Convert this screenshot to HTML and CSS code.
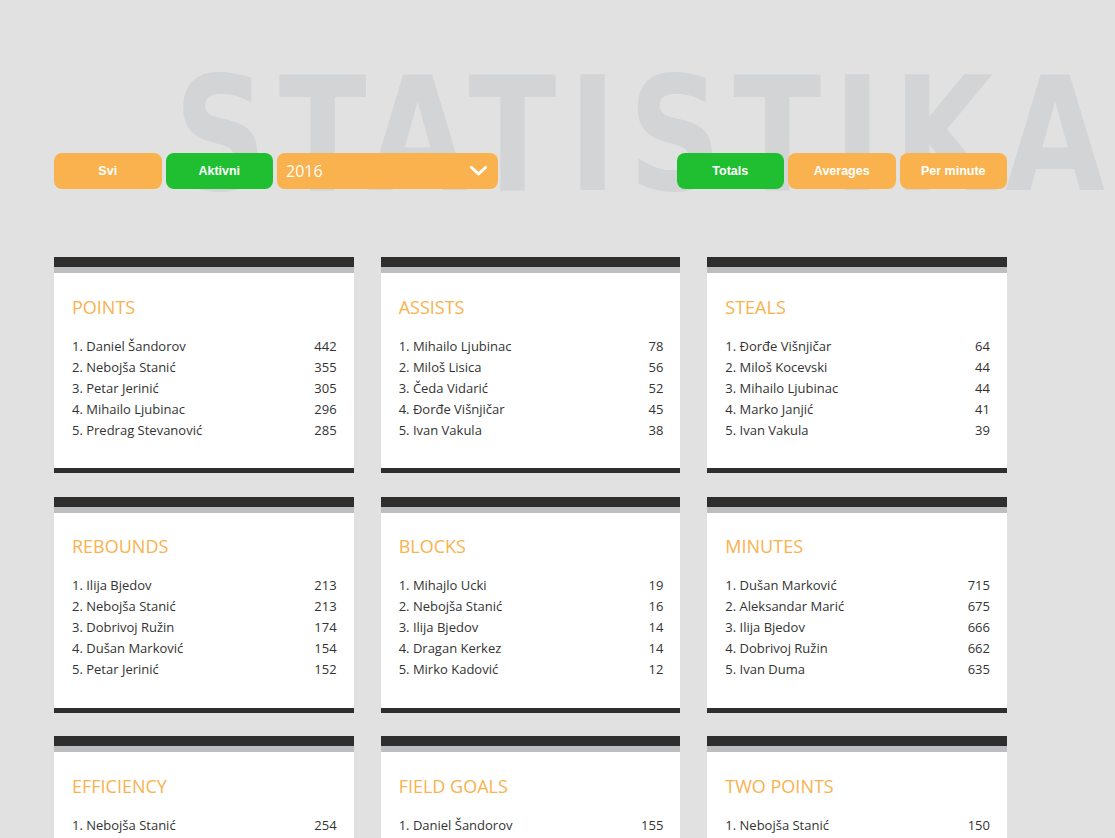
FILE: index.html
```html
<!DOCTYPE html>
<html lang="sr">
<head>
<meta charset="utf-8">
<title>Statistika</title>
<link rel="stylesheet" href="styles.css">
</head>
<body>
<div class="page">
  <header class="header">
    <div class="bg-title">STATISTIKA</div>
    <div class="controls">
      <div class="group">
        <button class="btn orange">Svi</button>
        <button class="btn green">Aktivni</button>
        <div class="select">
          <span>2016</span>
          <svg class="chev" width="17" height="10" viewBox="0 0 17 10"><polyline points="1.5,1.5 8.5,8 15.5,1.5" fill="none" stroke="#fff" stroke-width="3" stroke-linecap="round" stroke-linejoin="round"/></svg>
        </div>
      </div>
      <div class="group">
        <button class="btn green">Totals</button>
        <button class="btn orange">Averages</button>
        <button class="btn orange">Per minute</button>
      </div>
    </div>
  </header>

  <main class="grid">
    <section class="card">
      <h2>POINTS</h2>
      <ol>
        <li><span>1. Daniel Šandorov</span><span>442</span></li>
        <li><span>2. Nebojša Stanić</span><span>355</span></li>
        <li><span>3. Petar Jerinić</span><span>305</span></li>
        <li><span>4. Mihailo Ljubinac</span><span>296</span></li>
        <li><span>5. Predrag Stevanović</span><span>285</span></li>
      </ol>
    </section>
    <section class="card">
      <h2>ASSISTS</h2>
      <ol>
        <li><span>1. Mihailo Ljubinac</span><span>78</span></li>
        <li><span>2. Miloš Lisica</span><span>56</span></li>
        <li><span>3. Čeda Vidarić</span><span>52</span></li>
        <li><span>4. Đorđe Višnjičar</span><span>45</span></li>
        <li><span>5. Ivan Vakula</span><span>38</span></li>
      </ol>
    </section>
    <section class="card">
      <h2>STEALS</h2>
      <ol>
        <li><span>1. Đorđe Višnjičar</span><span>64</span></li>
        <li><span>2. Miloš Kocevski</span><span>44</span></li>
        <li><span>3. Mihailo Ljubinac</span><span>44</span></li>
        <li><span>4. Marko Janjić</span><span>41</span></li>
        <li><span>5. Ivan Vakula</span><span>39</span></li>
      </ol>
    </section>
    <section class="card">
      <h2>REBOUNDS</h2>
      <ol>
        <li><span>1. Ilija Bjedov</span><span>213</span></li>
        <li><span>2. Nebojša Stanić</span><span>213</span></li>
        <li><span>3. Dobrivoj Ružin</span><span>174</span></li>
        <li><span>4. Dušan Marković</span><span>154</span></li>
        <li><span>5. Petar Jerinić</span><span>152</span></li>
      </ol>
    </section>
    <section class="card">
      <h2>BLOCKS</h2>
      <ol>
        <li><span>1. Mihajlo Ucki</span><span>19</span></li>
        <li><span>2. Nebojša Stanić</span><span>16</span></li>
        <li><span>3. Ilija Bjedov</span><span>14</span></li>
        <li><span>4. Dragan Kerkez</span><span>14</span></li>
        <li><span>5. Mirko Kadović</span><span>12</span></li>
      </ol>
    </section>
    <section class="card">
      <h2>MINUTES</h2>
      <ol>
        <li><span>1. Dušan Marković</span><span>715</span></li>
        <li><span>2. Aleksandar Marić</span><span>675</span></li>
        <li><span>3. Ilija Bjedov</span><span>666</span></li>
        <li><span>4. Dobrivoj Ružin</span><span>662</span></li>
        <li><span>5. Ivan Duma</span><span>635</span></li>
      </ol>
    </section>
    <section class="card">
      <h2>EFFICIENCY</h2>
      <ol>
        <li><span>1. Nebojša Stanić</span><span>254</span></li>
        <li><span>2. Daniel Šandorov</span><span>231</span></li>
        <li><span>3. Ilija Bjedov</span><span>212</span></li>
        <li><span>4. Petar Jerinić</span><span>198</span></li>
        <li><span>5. Dobrivoj Ružin</span><span>187</span></li>
      </ol>
    </section>
    <section class="card">
      <h2>FIELD GOALS</h2>
      <ol>
        <li><span>1. Daniel Šandorov</span><span>155</span></li>
        <li><span>2. Nebojša Stanić</span><span>141</span></li>
        <li><span>3. Petar Jerinić</span><span>118</span></li>
        <li><span>4. Mihailo Ljubinac</span><span>110</span></li>
        <li><span>5. Predrag Stevanović</span><span>104</span></li>
      </ol>
    </section>
    <section class="card">
      <h2>TWO POINTS</h2>
      <ol>
        <li><span>1. Nebojša Stanić</span><span>150</span></li>
        <li><span>2. Daniel Šandorov</span><span>112</span></li>
        <li><span>3. Ilija Bjedov</span><span>98</span></li>
        <li><span>4. Dobrivoj Ružin</span><span>81</span></li>
        <li><span>5. Petar Jerinić</span><span>77</span></li>
      </ol>
    </section>
  </main>
</div>
</body>
</html>
```

FILE: styles.css
```css
* { box-sizing: border-box; }

html, body {
  margin: 0;
  padding: 0;
  background: #e1e1e1;
}

body {
  font-family: "Open Sans", "Liberation Sans", sans-serif;
  color: #333;
}

.page {
  width: 953px;
  margin-left: 54px;
}

.header {
  position: relative;
  padding-top: 153px;
  height: 257px;
}

.bg-title {
  position: absolute;
  top: 54px;
  left: 120px;
  font-family: "DejaVu Sans Condensed", "DejaVu Sans", sans-serif;
  font-stretch: condensed;
  font-weight: 700;
  font-size: 159px;
  line-height: 162px;
  letter-spacing: 13.5px;
  color: #d3d4d6;
  white-space: nowrap;
  transform: scaleX(0.9);
  transform-origin: left top;
  z-index: 0;
  user-select: none;
}

.controls {
  position: relative;
  z-index: 1;
  display: flex;
  justify-content: space-between;
}

.group {
  display: flex;
  gap: 4px;
}

.btn {
  width: 107.5px;
  height: 35.5px;
  border: 0;
  border-radius: 8px;
  padding: 0;
  font-family: "Liberation Sans", Arial, sans-serif;
  font-weight: 700;
  font-size: 12.5px;
  color: #fff;
  cursor: pointer;
}

.orange { background: #f9b24e; }
.green { background: #20bf31; }

.select {
  width: 220.5px;
  height: 35.5px;
  border-radius: 8px;
  background: #f9b24e;
  color: #fff;
  font-family: "Open Sans", sans-serif;
  font-size: 16px;
  display: flex;
  align-items: center;
  justify-content: space-between;
  padding: 0 11px 0 9px;
}

.select span { line-height: 1; }

.chev { display: block; margin-top: 1px; }

.grid {
  display: grid;
  grid-template-columns: repeat(3, 1fr);
  column-gap: 27px;
  row-gap: 23.5px;
}

.card {
  background: #fff;
  border-top: 10px solid #2e2e2e;
  border-bottom: 5px solid #2e2e2e;
  box-shadow: inset 0 6px 0 #bdbebf;
  padding: 27.5px 17px 27px 18px;
  height: 216px;
}

.card h2 {
  margin: 0 0 17px;
  font-weight: 400;
  font-size: 18px;
  line-height: 24px;
  color: #f9b24e;
}

.card ol {
  list-style: none;
  margin: 0;
  padding: 0;
}

.card li {
  display: flex;
  justify-content: space-between;
  font-size: 13px;
  line-height: 21px;
  color: #333;
}
```
